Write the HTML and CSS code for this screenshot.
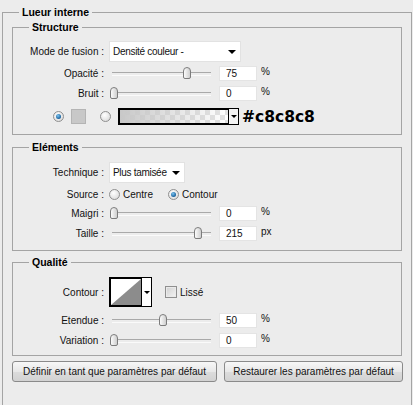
FILE: index.html
```html
<!DOCTYPE html>
<html lang="fr">
<head>
<meta charset="utf-8">
<title>Lueur interne</title>
<link rel="stylesheet" href="styles.css">
</head>
<body>
<fieldset class="panel">
  <legend>Lueur interne</legend>

  <fieldset class="group structure">
    <legend>Structure</legend>
    <div class="row row-select">
      <span class="label">Mode de fusion :</span>
      <div class="select select-mode"><span>Densité couleur -</span><i class="arrow"></i></div>
    </div>
    <div class="row row-first">
      <span class="label">Opacité :</span>
      <div class="slider"><div class="thumb" style="left:73px"></div></div>
      <div class="num">75</div><span class="unit">%</span>
    </div>
    <div class="row">
      <span class="label">Bruit :</span>
      <div class="slider"><div class="thumb" style="left:0px"></div></div>
      <div class="num">0</div><span class="unit">%</span>
    </div>
    <div class="row row-color">
      <span class="radio checked radio-color"></span>
      <span class="swatch"></span>
      <span class="radio radio-grad"></span>
      <div class="grad-picker"><div class="grad"></div><div class="grad-drop"><i class="arrow small"></i></div></div>
      <span class="hex">#c8c8c8</span>
    </div>
  </fieldset>

  <fieldset class="group elements">
    <legend>Eléments</legend>
    <div class="row row-select">
      <span class="label">Technique :</span>
      <div class="select select-tech"><span>Plus tamisée</span><i class="arrow"></i></div>
    </div>
    <div class="row row-source">
      <span class="label">Source :</span>
      <label class="option option-first"><span class="radio"></span>Centre</label>
      <label class="option"><span class="radio checked"></span>Contour</label>
    </div>
    <div class="row">
      <span class="label">Maigri :</span>
      <div class="slider"><div class="thumb" style="left:0px"></div></div>
      <div class="num">0</div><span class="unit">%</span>
    </div>
    <div class="row">
      <span class="label">Taille :</span>
      <div class="slider"><div class="thumb" style="left:84px"></div></div>
      <div class="num">215</div><span class="unit">px</span>
    </div>
  </fieldset>

  <fieldset class="group quality">
    <legend>Qualité</legend>
    <div class="row row-contour">
      <span class="label">Contour :</span>
      <div class="contour-picker">
        <div class="contour-thumb">
          <svg width="30" height="26" viewBox="0 0 30 26"><polygon points="0,26 30,0 30,26" fill="#8c8c8c"/></svg>
        </div>
        <div class="contour-drop"><i class="arrow small"></i></div>
      </div>
      <label class="check"><span class="box"></span>Lissé</label>
    </div>
    <div class="row row-after-contour">
      <span class="label">Etendue :</span>
      <div class="slider"><div class="thumb" style="left:49px"></div></div>
      <div class="num">50</div><span class="unit">%</span>
    </div>
    <div class="row">
      <span class="label">Variation :</span>
      <div class="slider"><div class="thumb" style="left:0px"></div></div>
      <div class="num">0</div><span class="unit">%</span>
    </div>
  </fieldset>

  <div class="buttons">
    <button class="btn btn-left" type="button">Définir en tant que paramètres par défaut</button>
    <button class="btn btn-right" type="button">Restaurer les paramètres par défaut</button>
  </div>
</fieldset>
</body>
</html>
```

FILE: styles.css
```css
* { box-sizing: border-box; }
html, body { margin: 0; padding: 0; }
body {
  background: #ececec;
  font-family: "Liberation Sans", Arial, sans-serif;
  font-size: 10px;
  color: #111;
  width: 413px;
  height: 405px;
  overflow: hidden;
}

.panel {
  margin: 5px 0 0 2px;
  width: 410px;
  min-width: 0;
  padding: 1px 9px 40px;
  border: 1px solid #a4a4a4;
}
legend {
  font-weight: bold;
  font-size: 10.5px;
  line-height: 14px;
  padding: 0 3px;
  color: #000;
}
.panel > legend { margin-left: 7px; }

.group {
  margin: 0;
  width: 390px;
  min-width: 0;
  border: 1px solid #a4a4a4;
}
.group > legend { margin-left: 16px; }
.structure { padding: 7px 0 4px; }
.elements { margin-top: 5px; padding: 8px 0 7px; }
.quality { margin-top: 4px; padding: 8px 0 5px; }

.row {
  display: flex;
  align-items: center;
  height: 20px;
}
.row-select { height: 21px; }
.row-first { margin-top: 1px; }
.row-color { height: 27px; }
.row-source { height: 18px; margin-top: 2px; }
.row-contour { height: 30px; }
.row-after-contour { margin-top: 3px; }

.label {
  flex: none;
  width: 91px;
  margin-right: 5px;
  text-align: right;
  white-space: nowrap;
}

/* selects */
.select {
  position: relative;
  height: 21px;
  background: #fff;
  border: 1px solid #e2e2e2;
  display: flex;
  align-items: center;
  padding-left: 3px;
  letter-spacing: -0.3px;
}
.select-mode { width: 132px; }
.select-tech { width: 76px; }
.select .arrow { position: absolute; right: 4px; top: 8px; }
.arrow {
  display: block;
  width: 0;
  height: 0;
  border-left: 4px solid transparent;
  border-right: 4px solid transparent;
  border-top: 4px solid #000;
}
.arrow.small {
  border-left-width: 3px;
  border-right-width: 3px;
  border-top-width: 3px;
}

/* sliders */
.slider {
  position: relative;
  flex: none;
  width: 101px;
  height: 12px;
  margin-left: 1px;
}
.slider::before {
  content: "";
  position: absolute;
  left: 2px;
  right: 0;
  top: 5px;
  height: 2px;
  border-top: 1px solid #a9a9a9;
  border-bottom: 1px solid #fafafa;
}
.thumb {
  position: absolute;
  top: 0;
  width: 8px;
  height: 12px;
  border: 1px solid #7c7c7c;
  border-radius: 4px 4px 2px 2px;
  background: linear-gradient(to right, #fbfbfb, #cfcfcf);
}
.num {
  flex: none;
  width: 38px;
  height: 15px;
  margin-left: 8px;
  padding-left: 6px;
  line-height: 14px;
  background: #fff;
  border: 1px solid #e4e4e4;
}
.unit {
  align-self: flex-start;
  margin-top: 3px;
  margin-left: 4px;
}

/* radios and checkbox */
.radio {
  flex: none;
  position: relative;
  display: inline-block;
  width: 11px;
  height: 11px;
  border-radius: 50%;
  border: 1px solid #8f8f8f;
  background: radial-gradient(circle at 40% 35%, #ffffff, #d4d4d4);
}
.radio.checked::after {
  content: "";
  position: absolute;
  left: 2px;
  top: 2px;
  width: 5px;
  height: 5px;
  border-radius: 50%;
  background: radial-gradient(circle at 40% 35%, #7cc4f0, #17609c 70%, #0c355a);
}
.radio-color { margin-left: 40px; }
.swatch {
  flex: none;
  width: 15px;
  height: 15px;
  margin-left: 7px;
  background: #c8c8c8;
  border: 1px solid #b4b4b4;
}
.radio-grad { margin-left: 14px; }
.grad-picker {
  flex: none;
  display: flex;
  height: 17px;
  margin-left: 7px;
}
.grad {
  width: 111px;
  height: 17px;
  border: 2px solid #000;
  border-right: 1px solid #000;
  background:
    linear-gradient(to right, #c8c8c8, rgba(200,200,200,0)),
    linear-gradient(45deg, #e2e2e2 25%, transparent 25%, transparent 75%, #e2e2e2 75%),
    linear-gradient(45deg, #e2e2e2 25%, #ffffff 25%, #ffffff 75%, #e2e2e2 75%);
  background-size: 100% 100%, 10px 10px, 10px 10px;
  background-position: 0 0, 0 0, 5px 5px;
}
.grad-drop {
  width: 10px;
  height: 17px;
  border: 1px solid #000;
  border-left: none;
  background: #f4f4f4;
  display: flex;
  align-items: center;
  justify-content: center;
}
.hex {
  margin-left: 3px;
  font-family: "DejaVu Sans", Verdana, sans-serif;
  font-weight: bold;
  font-size: 15.5px;
  color: #000;
}

.option {
  display: flex;
  align-items: center;
  gap: 3px;
}
.option-first { width: 59px; }

/* contour */
.contour-picker {
  flex: none;
  display: flex;
  height: 30px;
}
.contour-thumb {
  width: 33px;
  height: 30px;
  border: 2px solid #000;
  border-right: 1px solid #000;
  background: #fff;
  line-height: 0;
}
.contour-thumb svg { display: block; }
.contour-drop {
  width: 10px;
  height: 30px;
  border: 1px solid #000;
  border-left: none;
  background: #fff;
  display: flex;
  align-items: center;
  justify-content: center;
}
.check {
  display: flex;
  align-items: center;
  gap: 3px;
  margin-left: 13px;
}
.check .box {
  width: 12px;
  height: 12px;
  border: 1px solid #8f8f8f;
  background: linear-gradient(135deg, #d0d0d0, #f4f4f4);
  box-shadow: inset 0 0 0 1px #eaeaea;
}

/* buttons */
.buttons {
  display: flex;
  gap: 7px;
  margin-top: 5px;
}
.btn {
  height: 21px;
  padding: 0;
  font-family: "Liberation Sans", Arial, sans-serif;
  font-size: 10px;
  color: #111;
  border: 1px solid #8a8a8a;
  border-radius: 3px;
  background: linear-gradient(#f7f7f7, #e8e8e8 50%, #dcdcdc 51%, #d2d2d2);
}
.btn-left { width: 205px; }
.btn-right { width: 179px; margin-right: -1px; }
```
